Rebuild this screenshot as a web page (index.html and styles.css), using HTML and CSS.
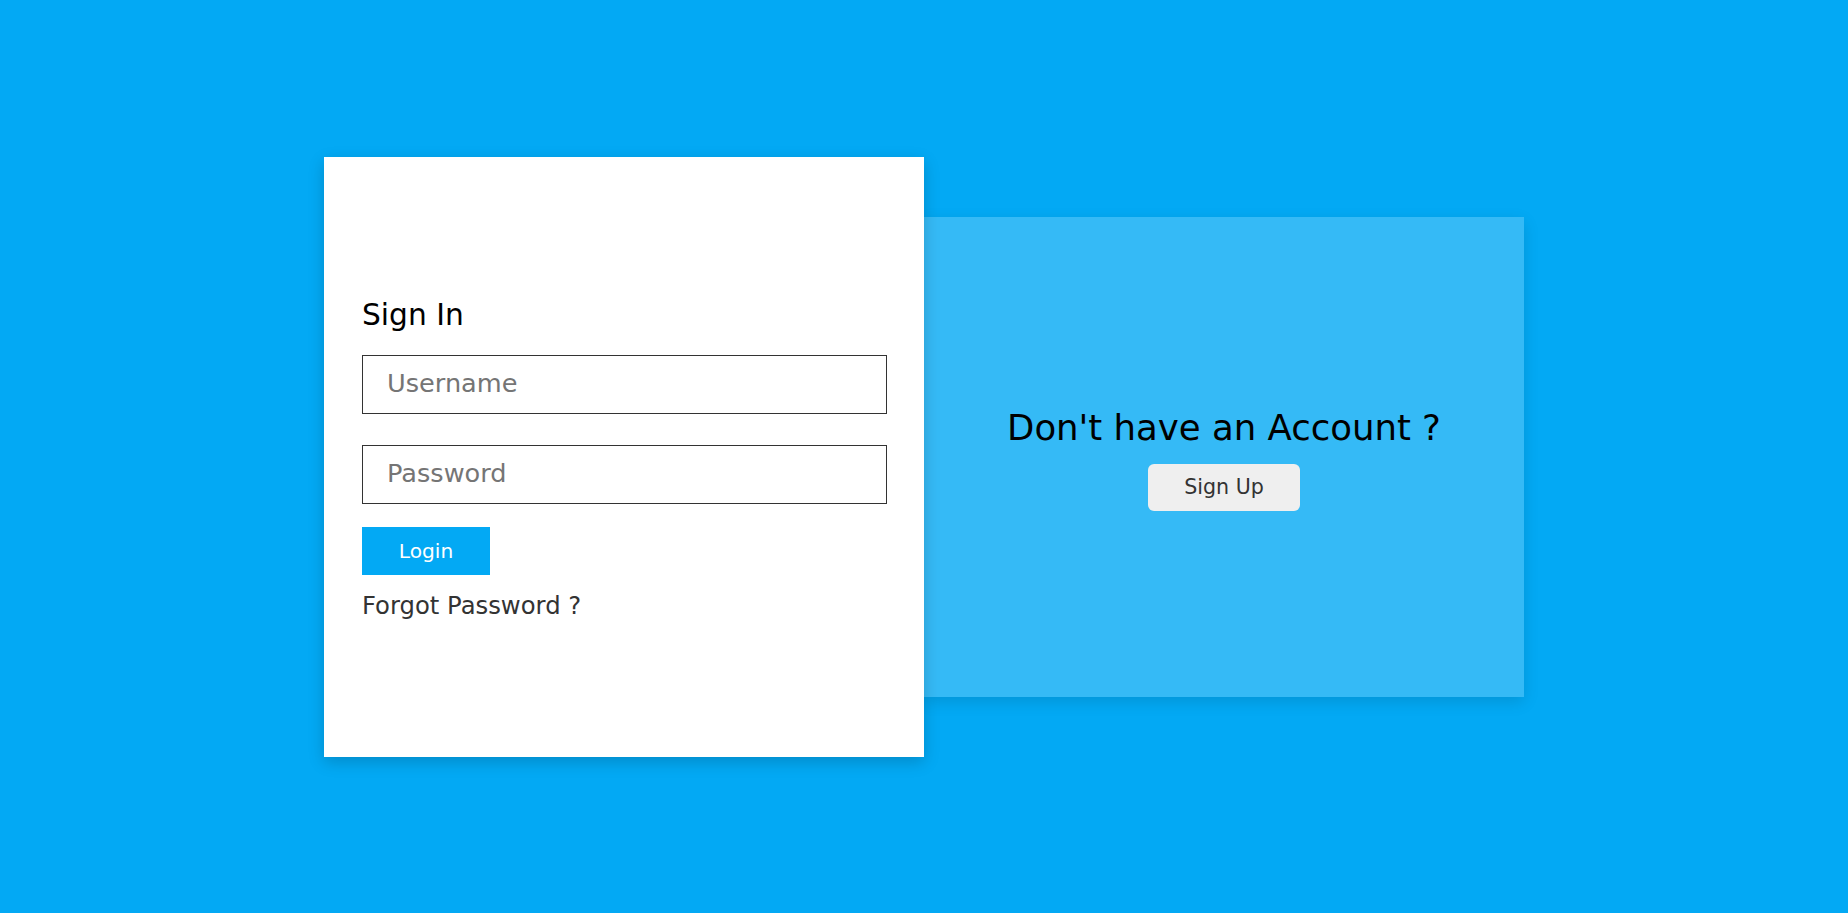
FILE: index.html
```html
<!DOCTYPE html>
<html lang="en">
<head>
<meta charset="utf-8">
<title>Sign In</title>
<link rel="stylesheet" href="styles.css">
</head>
<body>
<main class="page">
  <div class="wrap">
    <section class="card">
      <h2 class="card-title">Sign In</h2>
      <input class="field field-user" type="text" placeholder="Username">
      <input class="field field-pass" type="password" placeholder="Password">
      <button class="btn-login" type="button">Login</button>
      <a class="forgot" href="#">Forgot Password ?</a>
    </section>
    <section class="promo">
      <h2 class="promo-title">Don't have an Account ?</h2>
      <button class="btn-signup" type="button">Sign Up</button>
    </section>
  </div>
</main>
</body>
</html>
```
FILE: styles.css
```css
* { box-sizing: border-box; }

html, body {
  margin: 0;
  padding: 0;
}

body {
  background: #03a9f4;
  font-family: "DejaVu Sans", "Liberation Sans", sans-serif;
  color: #000;
}

.page {
  height: 100vh;
  display: flex;
  align-items: center;
  justify-content: center;
}

.wrap {
  display: flex;
  align-items: center;
}

.card {
  position: relative;
  z-index: 1;
  width: 600px;
  height: 600px;
  background: #fff;
  box-shadow: 0 5px 15px rgba(0, 0, 0, 0.18);
  padding: 3px 37px 0 38px;
  display: flex;
  flex-direction: column;
  justify-content: center;
  align-items: flex-start;
}

.card-title {
  margin: 0 0 22px;
  font-size: 29.7px;
  line-height: 36px;
  font-weight: 400;
  color: #000;
}

.field {
  display: block;
  width: 100%;
  height: 59px;
  margin: 0;
  padding: 0 24px 2px;
  border: 1px solid #333;
  border-radius: 0;
  outline: none;
  font-family: inherit;
  font-size: 25.6px;
  color: #333;
  background: #fff;
}

.field::placeholder {
  color: #757575;
}

.field-user {
  margin-bottom: 31px;
}

.field-pass {
  margin-bottom: 23px;
}

.btn-login {
  width: 128px;
  height: 48px;
  margin: 0 0 16px;
  padding: 0;
  border: none;
  background: #03a9f4;
  color: #fff;
  font-family: inherit;
  font-size: 20.2px;
  cursor: pointer;
}

.forgot {
  font-size: 24.3px;
  color: #333;
  text-decoration: none;
}

.promo {
  width: 600px;
  height: 480px;
  padding-top: 4px;
  background: rgba(255, 255, 255, 0.2);
  box-shadow: 0 5px 15px rgba(0, 0, 0, 0.12);
  display: flex;
  flex-direction: column;
  align-items: center;
  justify-content: center;
}

.promo-title {
  margin: 0 0 15px;
  font-size: 35.5px;
  line-height: 42px;
  font-weight: 400;
  color: #000;
}

.btn-signup {
  width: 152px;
  height: 47px;
  padding: 0;
  border: none;
  border-radius: 6px;
  background: #efefef;
  color: #333;
  font-family: inherit;
  font-size: 20.6px;
  cursor: pointer;
}
```
